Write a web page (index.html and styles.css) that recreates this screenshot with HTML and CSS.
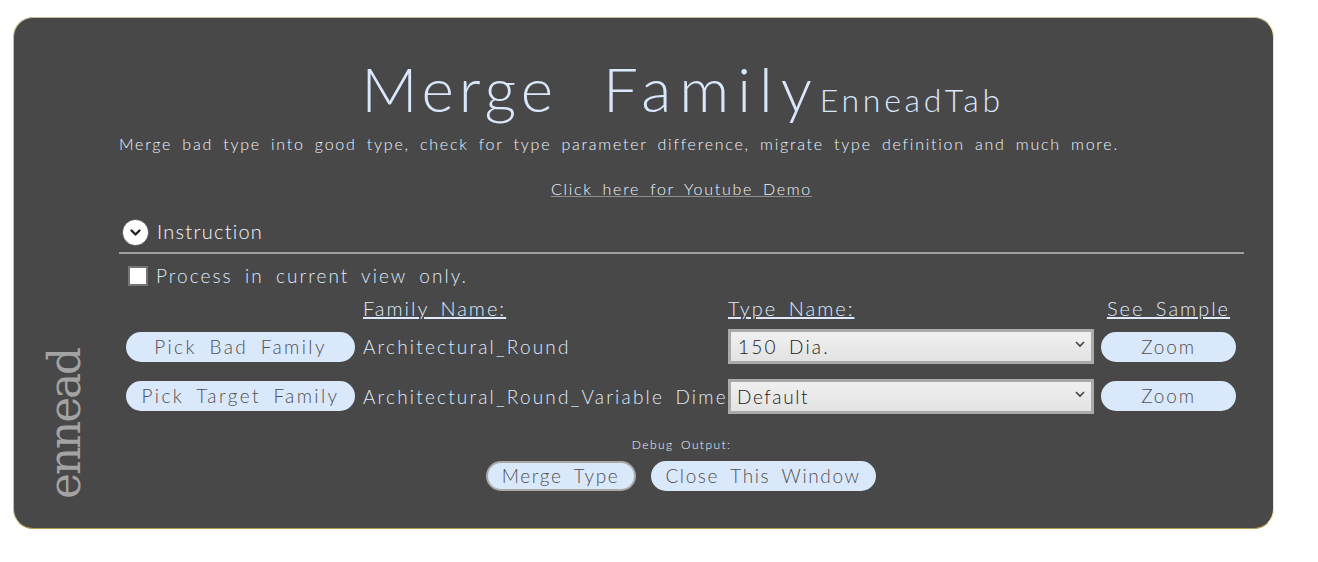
FILE: index.html
```html
<!DOCTYPE html>
<html lang="en">
<head>
<meta charset="utf-8">
<title>Merge Family</title>
<link rel="stylesheet" href="styles.css">
</head>
<body>
<div class="card">
  <aside class="brand"><span class="logo">ennead</span></aside>
  <main class="main">
    <h1 class="title"><span class="title-a">Merge</span> <span class="title-b">Family</span><span class="title-sub">EnneadTab</span></h1>
    <p class="desc">Merge bad type into good type, check for type parameter difference, migrate type definition and much more.</p>
    <p class="demo"><a href="#" class="demo-link">Click here for Youtube Demo</a></p>
    <div class="expander">
      <span class="exp-icon"><svg width="27" height="27" viewBox="0 0 27 27"><circle cx="13.5" cy="13.5" r="13" fill="#fff" stroke="#333" stroke-width="0.6"/><path d="M9.5 11.5l4 4 4-4" fill="none" stroke="#222" stroke-width="2.4" stroke-linecap="round" stroke-linejoin="round"/></svg></span>
      <span class="exp-label">Instruction</span>
    </div>
    <label class="check-row"><span class="check"></span><span>Process in current view only.</span></label>
    <div class="grid">
      <div></div>
      <div class="head"><u>Family Name:</u></div>
      <div class="head"><u>Type Name:</u></div>
      <div class="head head-center"><u>See Sample</u></div>

      <button class="pill pick">Pick Bad Family</button>
      <div class="fam">Architectural_Round</div>
      <div class="sel"><span class="sel-text sel-wide">150 Dia.</span><svg class="chev" width="10" height="7" viewBox="0 0 10 7"><path d="M1 1l4 4 4-4" fill="none" stroke="#444" stroke-width="1.6"/></svg></div>
      <button class="pill zoom">Zoom</button>

      <button class="pill pick row2">Pick Target Family</button>
      <div class="fam">Architectural_Round_Variable Dime</div>
      <div class="sel"><span class="sel-text">Default</span><svg class="chev" width="10" height="7" viewBox="0 0 10 7"><path d="M1 1l4 4 4-4" fill="none" stroke="#444" stroke-width="1.6"/></svg></div>
      <button class="pill zoom row2">Zoom</button>
    </div>
    <div class="debug">Debug Output:</div>
    <div class="actions">
      <button class="pill action focused">Merge Type</button>
      <button class="pill action">Close This Window</button>
    </div>
  </main>
</div>
</body>
</html>
```
FILE: styles.css
```css
* { box-sizing: border-box; }
html, body { margin: 0; height: 100%; background: #fff; }
body {
  padding: 17px 0 0 13px;
  font-family: "Lato", "Liberation Sans", sans-serif;
  font-weight: 300;
  color: #dfeafd;
  overflow: hidden;
}
.card {
  width: 1261px;
  height: 512px;
  display: flex;
  background: #484848;
  border-radius: 20px;
  border: 1px solid #c9bd94;
  border-right-color: #f2e4a6;
  border-bottom-color: #b39d4e;
}
.brand {
  width: 102px;
  flex: none;
  display: flex;
  justify-content: center;
  align-items: flex-end;
  padding: 0 0 29px 0;
}
.logo {
  writing-mode: vertical-rl;
  transform: rotate(180deg);
  font-family: "DejaVu Serif", serif;
  font-size: 44px;
  letter-spacing: -2.2px;
  line-height: 36px;
  color: #a3a3a3;
  font-weight: 400;
}
.main { width: 1125px; flex: none; margin-left: 3px; }
.title {
  margin: 32px 0 0;
  padding-left: 2px;
  height: 76px;
  text-align: center;
  font-size: 62px;
  line-height: 76px;
  font-weight: 300;
  word-spacing: 28px;
  white-space: nowrap;
  color: #d9e7fd;
}
.title-a { letter-spacing: 5px; }
.title-b { letter-spacing: 8px; }
.title-sub { font-size: 32px; letter-spacing: 3.7px; }
.desc {
  margin: 8px 0 0;
  font-size: 16px;
  line-height: 20px;
  letter-spacing: 1.77px;
  word-spacing: 4px;
  white-space: nowrap;
  color: #eef4ff;
}
.demo { margin: 25px 0 0; text-align: center; font-size: 16px; line-height: 20px; letter-spacing: 1.7px; word-spacing: 4px; }
.demo-link { display: inline-block; line-height: 15px; color: #eef4ff; text-decoration: none; border-bottom: 1px solid #8f8f8f; }
.expander {
  margin-top: 20px;
  height: 33px;
  padding-left: 3px;
  display: flex;
  align-items: flex-start;
  gap: 8px;
}
.exp-icon { display: block; height: 27px; }
.exp-label { font-size: 20px; line-height: 25px; letter-spacing: 1.25px; color: #f4f7fc; }
.check-row {
  display: flex;
  align-items: flex-start;
  gap: 8px;
  padding: 12px 0 0 9px;
  border-top: 2px solid #a0a0a0;
  height: 45px;
  font-size: 19px;
  line-height: 19px;
  letter-spacing: 2.05px;
  word-spacing: 5px;
}
.check { width: 20px; height: 20px; background: #fff; border: 2px solid #767676; flex: none; }
.grid {
  display: grid;
  grid-template-columns: 244px 365px 373px 135px;
  grid-template-rows: 25px 50px 50px;
  align-items: start;
  font-size: 19px;
  letter-spacing: 2.2px;
  word-spacing: 4px;
}
.head { font-size: 20px; line-height: 22px; letter-spacing: 2px; word-spacing: 4px; }
.head-center { text-align: center; }
.fam { white-space: nowrap; line-height: 50px; }
.pill {
  border: 0;
  background: #dae8fc;
  border-radius: 15px;
  height: 30px;
  padding: 0 0 2px;
  font: inherit;
  letter-spacing: 1.6px;
  word-spacing: 5px;
  color: #505050;
  white-space: nowrap;
}
.pick { width: 229px; margin: 10px 0 0 7px; letter-spacing: 2.4px; }
.zoom { width: 135px; margin-top: 10px; letter-spacing: 1.8px; }
.row2 { margin-top: 9px; }
.sel {
  position: relative;
  width: 366px;
  height: 35px;
  margin-top: 7px;
  border: 3px solid #aaa;
  background: linear-gradient(#f0f0f0, #e3e3e3);
  color: #222;
  display: flex;
  align-items: center;
  padding-left: 6px;
}
.sel-text { letter-spacing: 1.6px; }
.sel-wide { padding-left: 1px; letter-spacing: 2.2px; }
.chev { position: absolute; right: 6px; top: 9px; }
.debug {
  margin-top: 15px;
  text-align: center;
  font-size: 12px;
  line-height: 16px;
  letter-spacing: 1.4px;
  word-spacing: 3px;
  color: #eef4ff;
}
.actions {
  display: flex;
  justify-content: center;
  gap: 15px;
  margin-top: 8px;
  padding-right: 2px;
  font-size: 19px;
}
.action { height: 30px; }
.focused { width: 150px; border: 2px solid #a9a9a9; }
.action:not(.focused) { width: 225px; }
```
